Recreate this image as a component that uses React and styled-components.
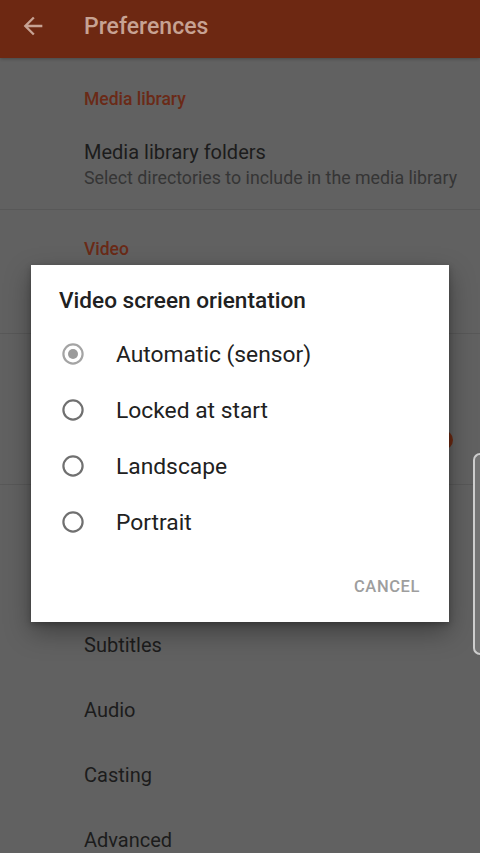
import React from 'react';
import styled, { createGlobalStyle } from 'styled-components';

const GlobalStyle = createGlobalStyle`
  body {
    margin: 0;
    background: #616161;
    font-family: Roboto, 'Noto Sans', sans-serif;
  }
`;

const Screen = styled.div`
  position: relative;
  width: 480px;
  height: 853px;
  overflow: hidden;
  background: #616161;
  display: flex;
  flex-direction: column;
`;

const Toolbar = styled.div`
  flex: none;
  height: 58px;
  box-sizing: border-box;
  padding-bottom: 6px;
  background: #6d2812;
  display: flex;
  align-items: center;
  box-shadow: 0 1px 3px rgba(0, 0, 0, 0.25);
  z-index: 1;
`;

const BackButton = styled.div`
  width: 84px;
  display: flex;
  align-items: center;
  padding-left: 19px;
  box-sizing: border-box;
  color: #c7a293;

  svg {
    display: block;
  }
`;

const ToolbarTitle = styled.div`
  font-size: 23px;
  font-weight: 500;
  color: #c7a293;
`;

const List = styled.div`
  display: flex;
  flex-direction: column;
`;

const Category = styled.div`
  box-sizing: border-box;
  height: ${(p) => p.$h}px;
  padding: ${(p) => p.$top}px 0 0 84px;
  font-size: 17.5px;
  line-height: 20px;
  font-weight: 500;
  color: #6a2a17;
`;

const Row = styled.div`
  box-sizing: border-box;
  height: ${(p) => p.$h}px;
  display: flex;
  align-items: center;
  padding: 0 26px 0 84px;
`;

const RowText = styled.div`
  flex: 1;
  display: flex;
  flex-direction: column;
  gap: 3px;
`;

const RowTitle = styled.div`
  font-size: 20px;
  line-height: 24px;
  color: #1c1c1c;
`;

const RowSummary = styled.div`
  font-size: 17.8px;
  line-height: 22px;
  color: #353535;
  white-space: nowrap;
`;

const Divider = styled.div`
  height: 1px;
  background: #585858;
`;

const Dialog = styled.div`
  position: absolute;
  top: 265px;
  left: 31px;
  width: 418px;
  height: 357px;
  box-sizing: border-box;
  background: #ffffff;
  box-shadow: 0 10px 24px rgba(0, 0, 0, 0.35), 0 2px 6px rgba(0, 0, 0, 0.25);
  display: flex;
  flex-direction: column;
`;

const DialogTitle = styled.div`
  padding: 24px 0 13px 28px;
  font-size: 22.6px;
  line-height: 24px;
  font-weight: 500;
  color: #212121;
`;

const Option = styled.div`
  height: 56px;
  display: flex;
  align-items: center;
  padding-left: 31px;
  gap: 32px;
  font-size: 22.8px;
  color: #212121;
`;

const Actions = styled.div`
  flex: 1;
  display: flex;
  justify-content: flex-end;
  align-items: center;
  padding: 0 29px 0 0;
`;

const TextButton = styled.div`
  font-size: 16.5px;
  font-weight: 500;
  letter-spacing: 0.6px;
  color: #9e9e9e;
`;

const EdgeHandle = styled.div`
  position: absolute;
  top: 453px;
  right: 0;
  width: 5px;
  height: 198px;
  background: #747474;
  border: 2px solid #cdcdcd;
  border-right: none;
  border-radius: 7px 0 0 7px;
`;

const BackArrow = () => (
  <svg width="28" height="28" viewBox="0 0 24 24" fill="currentColor">
    <path d="M20 11H7.83l5.59-5.59L12 4l-8 8 8 8 1.41-1.41L7.83 13H20v-2z" />
  </svg>
);

const Switch = () => (
  <svg width="38" height="22" viewBox="0 0 38 22">
    <rect x="3" y="4" width="32" height="14" rx="7" fill="#5a3a2e" />
    <circle cx="27" cy="11" r="10" fill="#6e2a12" />
  </svg>
);

const Radio = ({ checked }) => (
  <svg width="22" height="22" viewBox="0 0 22 22">
    <circle
      cx="11"
      cy="11"
      r="9.6"
      fill="none"
      stroke={checked ? '#a4a4a4' : '#707070'}
      strokeWidth="2.2"
    />
    {checked && <circle cx="11" cy="11" r="5" fill="#9a9a9a" />}
  </svg>
);

const options = ['Automatic (sensor)', 'Locked at start', 'Landscape', 'Portrait'];
const extras = ['Subtitles', 'Audio', 'Casting', 'Advanced'];

// rows that sit fully under the dialog carry no text, only their height
const App = () => (
  <>
    <GlobalStyle />
    <Screen>
      <Toolbar>
        <BackButton>
          <BackArrow />
        </BackButton>
        <ToolbarTitle>Preferences</ToolbarTitle>
      </Toolbar>
      <List>
        <Category $h={62} $top={31}>
          Media library
        </Category>
        <Row $h={89}>
          <RowText>
            <RowTitle>Media library folders</RowTitle>
            <RowSummary>Select directories to include in the media library</RowSummary>
          </RowText>
        </Row>
        <Divider />
        <Category $h={62} $top={29}>
          Video
        </Category>
        <Row $h={61} />
        <Divider />
        <Row $h={62} />
        <Row $h={88}>
          <RowText />
          <Switch />
        </Row>
        <Divider />
        <Row $h={62} />
        <Row $h={65} />
        {extras.map((name) => (
          <Row key={name} $h={65}>
            <RowTitle>{name}</RowTitle>
          </Row>
        ))}
      </List>

      <Dialog>
        <DialogTitle>Video screen orientation</DialogTitle>
        {options.map((label, i) => (
          <Option key={label}>
            <Radio checked={i === 0} />
            <span>{label}</span>
          </Option>
        ))}
        <Actions>
          <TextButton>CANCEL</TextButton>
        </Actions>
      </Dialog>

      <EdgeHandle />
    </Screen>
  </>
);

export default App;
